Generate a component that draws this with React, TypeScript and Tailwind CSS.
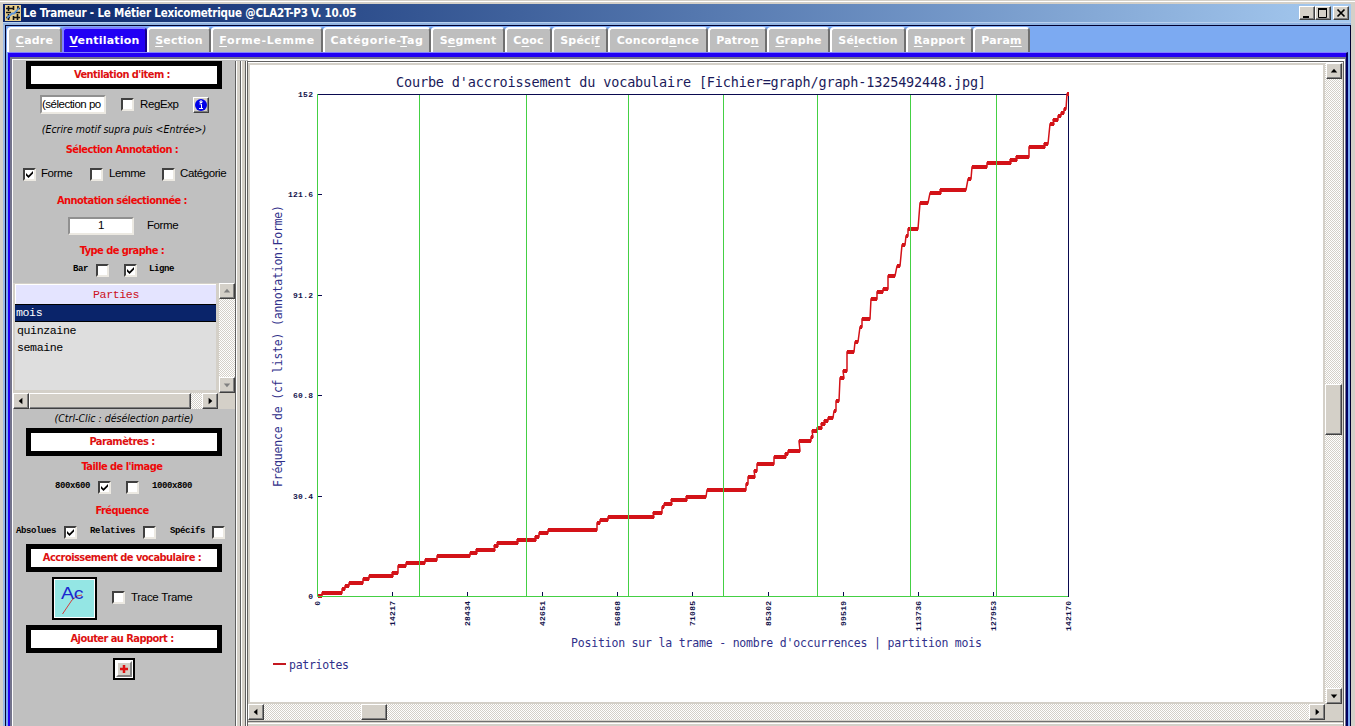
import type { ReactNode } from "react";

const tabs = [
  { pre: "", key: "C", post: "adre", width: "w-[55px]" },
  { pre: "", key: "V", post: "entilation", width: "w-[85px]", active: true },
  { pre: "", key: "S", post: "ection", width: "w-[64px]" },
  { pre: "", key: "F", post: "orme-Lemme", width: "w-[112px]", wide: true },
  { pre: "Catégorie-", key: "T", post: "ag", width: "w-[108px]", wide: true },
  { pre: "S", key: "e", post: "gment", width: "w-[74px]" },
  { pre: "C", key: "o", post: "oc", width: "w-[47px]" },
  { pre: "Spéci", key: "f", post: "", width: "w-[56px]" },
  { pre: "Concord", key: "a", post: "nce", width: "w-[100px]" },
  { pre: "Patro", key: "n", post: "", width: "w-[59px]" },
  { pre: "", key: "G", post: "raphe", width: "w-[63px]" },
  { pre: "Sé", key: "l", post: "ection", width: "w-[76px]" },
  { pre: "", key: "R", post: "apport", width: "w-[67px]" },
  { pre: "Para", key: "m", post: "", width: "w-[57px]" },
];

// flat parts of the curve: [x start, x end, y]
const steps = [
  [318, 322, 596], [322, 342, 593], [342, 345, 589], [345, 349, 586], [349, 363, 583],
  [363, 369, 579], [369, 393, 576], [392, 398, 573], [398, 406, 566], [406, 425, 563],
  [425, 437, 560], [437, 470, 556], [470, 477, 553], [476, 495, 550], [494, 498, 546],
  [497, 518, 543], [517, 536, 540], [535, 539, 537], [539, 548, 533], [548, 597, 530],
  [597, 600, 523], [600, 608, 520], [608, 654, 517], [653, 662, 513], [662, 664, 507],
  [664, 672, 504], [671, 687, 500], [686, 706, 497], [707, 746, 490], [746, 748, 484],
  [748, 755, 477], [754, 757, 471], [757, 774, 464], [774, 786, 457], [785, 788, 454],
  [788, 800, 451], [799, 811, 441], [811, 813, 437], [812, 817, 431], [817, 822, 428],
  [821, 825, 424], [824, 828, 421], [828, 833, 418], [834, 836, 411], [836, 839, 401],
  [840, 844, 378], [843, 847, 371], [847, 854, 352], [855, 858, 342], [860, 862, 327],
  [862, 870, 319], [871, 877, 299], [877, 883, 292], [883, 888, 289], [888, 895, 276],
  [897, 900, 266], [902, 905, 245], [906, 908, 236], [908, 918, 229], [920, 928, 203],
  [930, 941, 193], [940, 966, 190], [968, 971, 179], [972, 987, 167], [987, 1011, 163],
  [1010, 1017, 160], [1016, 1029, 157], [1029, 1045, 147], [1044, 1048, 144], [1050, 1054, 124],
  [1053, 1058, 120], [1058, 1061, 116], [1061, 1064, 113], [1064, 1066, 109], [1067, 1069, 94],
];

const separators = [419.5, 526.5, 628.5, 723.5, 817.5, 910.5, 996.5];

const xTicks = [
  { x: 317.5, label: "0" },
  { x: 392.5, label: "14217" },
  { x: 467.5, label: "28434" },
  { x: 542.5, label: "42651" },
  { x: 617.5, label: "56868" },
  { x: 692.5, label: "71085" },
  { x: 768.5, label: "85302" },
  { x: 843.5, label: "99519" },
  { x: 918.5, label: "113736" },
  { x: 993.5, label: "127953" },
  { x: 1068.5, label: "142170" },
];

const yTicks = [
  { y: 94.5, label: "152" },
  { y: 194.5, label: "121.6" },
  { y: 295.5, label: "91.2" },
  { y: 395.5, label: "60.8" },
  { y: 496.5, label: "30.4" },
  { y: 596.5, label: "0" },
];

const raised = "border border-t-white border-l-white border-r-[#404040] border-b-[#404040] bg-[#d4d0c8] shadow-[inset_-1px_-1px_0_#808080]";
const track = "bg-[repeating-conic-gradient(#ffffff_0_25%,#d4d0c8_0_50%)] bg-[length:2px_2px]";

function ArrowButton({ dir, disabled = false, className = "" }: { dir: "up" | "down" | "left" | "right"; disabled?: boolean; className?: string }) {
  const shapes = {
    up: "4,9 11,9 7.5,5",
    down: "4,6 11,6 7.5,10",
    left: "9,4 9,11 5,7.5",
    right: "6,4 6,11 10,7.5",
  };
  return (
    <div className={`h-4 w-4 shrink-0 ${raised} ${className}`}>
      <svg viewBox="0 0 15 15" className="h-[14px] w-[14px]">
        <polygon points={shapes[dir]} fill={disabled ? "#808080" : "#000"} />
      </svg>
    </div>
  );
}

function Check({ checked = false }: { checked?: boolean }) {
  return (
    <span className="block h-[13px] w-[13px] shrink-0 border-2 border-t-[#404040] border-l-[#404040] border-r-[#ece9e2] border-b-[#ece9e2] bg-white">
      {checked && (
        <svg viewBox="0 0 9 9" className="h-[9px] w-[9px]">
          <path d="M1 3v2.5l2.5 2.5L8 3.5V1L3.5 5.5z" fill="#000" />
        </svg>
      )}
    </span>
  );
}

function BoxTitle({ children, className = "" }: { children: ReactNode; className?: string }) {
  return (
    <div className={`ml-[13px] flex h-7 w-[196px] shrink-0 items-center justify-center border-[5px] border-black bg-white pr-1 font-['DejaVu_Sans_Condensed','DejaVu_Sans',sans-serif] text-[11px] font-bold tracking-[-0.55px] text-[#dd1111] ${className}`}>
      {children}
    </div>
  );
}

function RedLabel({ children, className = "" }: { children: ReactNode; className?: string }) {
  return (
    <div className={`flex w-[222px] shrink-0 items-center justify-center pr-1 font-['DejaVu_Sans_Condensed','DejaVu_Sans',sans-serif] text-[11px] font-bold tracking-[-0.55px] text-[#ee0808] ${className}`}>
      {children}
    </div>
  );
}

function TitleBar() {
  return (
    <div className="flex h-[18px] shrink-0 items-center bg-linear-to-r from-[#0a246a] to-[#a6caf0] pl-[2px]">
      <svg viewBox="0 0 16 16" className="h-4 w-4">
        <rect width="16" height="16" fill="#e8cf8c" />
        <path d="M1 3.500h8M12 3.500h3M1 7.500h5M10 7.500h5M1 12.500h4M8 12.500h7M3.500 1v5M3.500 9v6M8.500 1v4M8.500 11v4M12.500 9v6M13 1v3" stroke="#111" strokeWidth="1.600" />
        <path d="M2 13L7 8.500h2L14 3" stroke="#5b93d8" strokeWidth="1.800" fill="none" />
      </svg>
      <span className="mt-px ml-[2px] flex-1 whitespace-nowrap font-['DejaVu_Sans_Condensed','DejaVu_Sans',sans-serif] text-[11.5px] font-bold tracking-[-0.19px] text-white">
        Le Trameur - Le Métier Lexicometrique @CLA2T-P3 V. 10.05
      </span>
      <div className="mr-[2px] flex">
        <div className={`h-[14px] w-4 ${raised}`}>
          <svg viewBox="0 0 14 12" className="h-3 w-[14px]"><path d="M3 9h6v2H3z" /></svg>
        </div>
        <div className={`h-[14px] w-4 ${raised}`}>
          <svg viewBox="0 0 14 12" className="h-3 w-[14px]"><path d="M2.500 2v8.500h8V2M2 2h9" fill="none" stroke="#000" /><path d="M2 1h9v2H2z" /></svg>
        </div>
        <div className={`ml-[2px] h-[14px] w-4 ${raised}`}>
          <svg viewBox="0 0 14 12" className="h-3 w-[14px]"><path d="M3.500 2.500l7 7M10.500 2.500l-7 7" stroke="#000" strokeWidth="1.700" /></svg>
        </div>
      </div>
    </div>
  );
}

function TabBar() {
  return (
    <div className="flex h-[26px] shrink-0 bg-[#7caaf2] pt-px">
      {tabs.map((tab) => (
        <div
          key={tab.pre + tab.key + tab.post}
          className={`flex shrink-0 items-center justify-center rounded-t-[4px] border-t-2 border-l-2 border-r-2 pt-[2px] whitespace-nowrap font-['DejaVu_Sans',sans-serif] text-[11px] font-bold text-white ${tab.width} ${
            tab.wide ? "tracking-[0.65px]" : "tracking-[0.2px]"
          } ${
            tab.active ? "border-t-[#8080ff] border-l-[#8080ff] border-r-[#15008a] bg-[#2200f4]" : "border-t-white border-l-white border-r-[#707070] bg-[#bebebe]"
          }`}
        >
          <span>
            {tab.pre}
            <span className="underline underline-offset-2">{tab.key}</span>
            {tab.post}
          </span>
        </div>
      ))}
    </div>
  );
}

function PartList() {
  return (
    <div className="flex h-[126px] w-[222px] shrink-0 flex-col bg-[#d4d0c8]">
      <div className="flex h-[110px]">
        <div className="mt-px ml-[2px] h-[106px] w-[201px] bg-[#dedede] font-['Liberation_Mono',monospace] text-[11.600px] text-black">
          <div className="flex h-5 items-center justify-center border-t border-l border-white bg-[#e4e4ff] text-[#cc1122]">Parties</div>
          <div className="flex h-[18px] items-center border-y border-black bg-[#0a246a] pl-px text-white">mois</div>
          <div className="flex h-[17px] items-center pl-[2px]">quinzaine</div>
          <div className="flex h-[17px] items-center pl-[2px]">semaine</div>
        </div>
        <div className={`ml-[3px] flex w-4 flex-col justify-between ${track}`}>
          <ArrowButton dir="up" disabled />
          <ArrowButton dir="down" disabled />
        </div>
      </div>
      <div className={`flex h-4 w-[205px] ${track}`}>
        <ArrowButton dir="left" />
        <div className={`mr-auto w-[162px] ${raised}`} />
        <ArrowButton dir="right" />
      </div>
    </div>
  );
}

function Sidebar() {
  return (
    <aside className="flex w-[222px] shrink-0 flex-col overflow-hidden bg-[#c0c0c0] font-['Liberation_Sans',sans-serif] text-[11.5px] tracking-[-0.4px] text-black">
      <BoxTitle>Ventilation d'item :</BoxTitle>
      <div className="mt-[6px] flex h-[19px] items-center">
        <div className="ml-[27px] flex h-[19px] w-[66px] items-center border-2 border-t-[#909090] border-l-[#909090] border-[#ece9e2] bg-white whitespace-nowrap tracking-[-0.5px]">(sélection po</div>
        <div className="ml-[15px] flex items-center gap-[6px]">
          <Check />
          <span className="w-[53px]">RegExp</span>
        </div>
        <div className={`h-4 w-4 ${raised}`}>
          <svg viewBox="0 0 14 14" className="h-[14px] w-[14px]">
            <circle cx="7" cy="7" r="6" fill="#0000e8" />
            <path d="M6 3h2v1.500H6zM5.500 6h2v4M5 10.500h4" fill="none" stroke="#fff" />
          </svg>
        </div>
      </div>
      <div className="flex h-[31px] w-[222px] shrink-0 items-center justify-center whitespace-nowrap font-['DejaVu_Sans_Condensed',sans-serif] text-[10.500px] tracking-normal italic">(Ecrire motif supra puis &lt;Entrée&gt;)</div>
      <RedLabel className="mt-[2px] h-[7px]">Sélection Annotation :</RedLabel>
      <div className="mt-[12px] flex h-[16px] shrink-0 items-center pl-[10px]">
        <Check checked />
        <span className="ml-[5px] w-[49px]">Forme</span>
        <Check />
        <span className="ml-[6px] w-[53px]">Lemme</span>
        <Check />
        <span className="ml-[5px]">Catégorie</span>
      </div>
      <RedLabel className="h-[37px] pt-[2px]">Annotation sélectionnée :</RedLabel>
      <div className="-mt-[2px] flex h-[18px] shrink-0 items-center">
        <div className="ml-[55px] flex h-[18px] w-[66px] items-center justify-center border-2 border-t-[#909090] border-l-[#909090] border-[#ece9e2] bg-white">1</div>
        <span className="ml-[13px]">Forme</span>
      </div>
      <RedLabel className="h-[30px] pt-[2px]">Type de graphe :</RedLabel>
      <div className="-mt-[2px] flex h-[14px] shrink-0 items-center pl-[60px] font-['Liberation_Mono',monospace] text-[9px] font-bold">
        <span className="w-[23px]">Bar</span>
        <Check />
        <span className="w-[15px]" />
        <Check checked />
        <span className="ml-3">Ligne</span>
      </div>
      <div className="h-[6px] shrink-0" />
      <PartList />
      <div className="flex h-[19px] w-[222px] shrink-0 items-center justify-center whitespace-nowrap font-['DejaVu_Sans_Condensed',sans-serif] text-[10.500px] tracking-normal italic">(Ctrl-Clic : désélection partie)</div>
      <BoxTitle>Paramètres :</BoxTitle>
      <RedLabel className="h-[23px]">Taille de l'image</RedLabel>
      <div className="mt-px flex h-[14px] shrink-0 items-center pl-[42px] font-['Liberation_Mono',monospace] text-[9px] font-bold">
        <span className="w-[43px]">800x600</span>
        <Check checked />
        <span className="w-[15px]" />
        <Check />
        <span className="ml-[13px]">1000x800</span>
      </div>
      <RedLabel className="h-[31px] pt-[3px]">Fréquence</RedLabel>
      <div className="flex h-[14px] shrink-0 items-center pl-[3px] font-['Liberation_Mono',monospace] text-[9px] font-bold">
        <span className="w-[48px]">Absolues</span>
        <Check checked />
        <span className="ml-[13px] w-[53px]">Relatives</span>
        <Check />
        <span className="ml-[14px] w-[42px]">Spécifs</span>
        <Check />
      </div>
      <BoxTitle className="mt-[5px]">Accroissement de vocabulaire :</BoxTitle>
      <div className="mt-[5px] flex h-[43px] shrink-0 items-center">
        <div className="ml-[39px] h-[43px] w-[45px] border-2 border-black bg-[#94e6e4] shadow-[inset_0_0_0_1px_#fff]">
          <svg viewBox="0 0 41 39" className="h-[39px] w-[41px]">
            <path d="M8.500 35L18 21l5-4 5-1" fill="none" stroke="#d43c3c" />
            <text x="7" y="20" fontSize="17" textLength="22" lengthAdjust="spacingAndGlyphs" fontFamily="Liberation Sans" fill="#1c28d0">Ac</text>
          </svg>
        </div>
        <div className="-mt-[2px] ml-[15px] flex items-center gap-[6px]">
          <Check />
          <span className="tracking-[-0.3px]">Trace Trame</span>
        </div>
      </div>
      <BoxTitle className="mt-[5px]">Ajouter au Rapport :</BoxTitle>
      <div className="mt-[5px] ml-[100px] h-[22px] w-[22px] shrink-0 border-2 border-black bg-white p-px">
        <div className="h-4 w-4 border-2 border-t-white border-l-white border-[#808080] bg-[#d4d0c8]">
          <svg viewBox="0 0 12 12" className="h-3 w-3"><path d="M6 2v8M2 6h8" stroke="#dd1111" strokeWidth="2.500" /></svg>
        </div>
      </div>
    </aside>
  );
}

function Chart() {
  const line = steps.map(([x1, x2, y]) => `${x1},${y} ${x2},${y}`).join(" ");
  return (
    <svg viewBox="250 65 1073 637" className="h-[637px] w-[1073px] shrink-0 bg-white" fontFamily="'DejaVu Sans Mono', monospace">
      <text x="396" y="87" fontSize="13.500" textLength="590" fill="#1a1a5a">Courbe d'accroissement du vocabulaire [Fichier=graph/graph-1325492448.jpg]</text>
      <path d="M318 94.500H1068.500V597" fill="none" stroke="#0a0a50" />
      <g stroke="#0a0a50">
        {yTicks.map((t) => <path key={t.label} d={`M318 ${t.y}h4`} />)}
        {xTicks.map((t) => <path key={t.label} d={`M${t.x} 592v4`} />)}
      </g>
      <g stroke="#d31218" fill="none">
        <polyline points={line} strokeWidth="1.500" />
        {steps.map(([x1, x2, y]) => <path key={x1 + "-" + y} d={`M${x1} ${y}H${x2}`} strokeWidth="4" />)}
      </g>
      <path d="M317.500 94V596.500H1068" fill="none" stroke="#44d044" />
      {separators.map((x) => <path key={x} d={`M${x} 95V597`} stroke="#44d044" />)}
      <g fontSize="8" fontWeight="bold" fill="#14144c" fontFamily="'Liberation Mono', monospace">
        {yTicks.map((t) => (
          <text key={t.label} x="313" y={t.y + 2.5} textAnchor="end" textLength={t.label.length * 5}>{t.label}</text>
        ))}
        {xTicks.map((t) => (
          <text key={t.label} transform={`translate(${t.x + 2.5} 601) rotate(-90)`} textAnchor="end" textLength={t.label.length * 5}>{t.label}</text>
        ))}
      </g>
      <g fontSize="11.500" fill="#30308a">
        <text transform="translate(282 487) rotate(-90)" textLength="282">Fréquence de (cf liste) (annotation:Forme)</text>
        <text x="571" y="647" textLength="411">Position sur la trame - nombre d'occurrences | partition mois</text>
        <text x="289" y="669" textLength="60">patriotes</text>
      </g>
      <path d="M273 664h13" stroke="#c41820" strokeWidth="2" />
    </svg>
  );
}

function Viewer() {
  return (
    <main className="mt-px flex w-[1096px] shrink-0 flex-col border-t border-r border-[#606060] bg-[#d4d0c8]">
      <div className="h-px shrink-0 bg-white" />
      <div className="flex h-[641px] shrink-0">
        <div className="flex w-[1077px] flex-col border-t-2 border-l-2 border-[#d4d0c8]">
          <Chart />
        </div>
        <div className={`flex h-[641px] w-[17px] flex-col items-end ${track}`}>
          <ArrowButton dir="up" />
          <div className={`mt-[305px] h-[51px] w-[17px] ${raised}`} />
          <ArrowButton dir="down" className="mt-auto" />
        </div>
      </div>
      <div className="flex h-4 shrink-0">
        <div className={`flex w-[1077px] ${track}`}>
          <ArrowButton dir="left" />
          <div className={`ml-[97px] w-[26px] ${raised}`} />
          <ArrowButton dir="right" className="ml-auto" />
        </div>
      </div>
      <div className="mt-px h-[3px] shrink-0 border-t border-b border-t-[#707070] border-b-white" />
    </main>
  );
}

export default function App() {
  return (
    <div className="flex h-[726px] w-[1355px] flex-col overflow-hidden bg-[#d4d0c8]">
      <div className="mt-px h-px shrink-0 bg-white" />
      <div className="mt-[2px] flex min-h-0 flex-1 flex-col pr-1 pl-[3px]">
        <TitleBar />
        <div className="h-px shrink-0 bg-[#b8d0ee]" />
        <div className="h-[2px] shrink-0 bg-[#8fb2e0]" />
        <div className="flex min-h-0 flex-1 border-l-2 border-[#9bbbe8]">
          <div className="flex min-h-0 flex-1 flex-col border-t border-r border-l border-[#000030] bg-[#7caaf2]">
            <div className="ml-px shrink-0">
              <TabBar />
            </div>
            <div className="mr-[2px] ml-[2px] flex min-h-0 flex-1 flex-col border-t border-r-2 border-t-[#8080ff] border-r-[#000060] bg-[#2200f4] pt-1 pl-[2px]">
              <div className="flex min-h-0 flex-1 border-t-2 border-r border-l-2 border-[#74748c] bg-white">
                <div className="flex min-h-0 border-t border-l border-white">
                  <div className="flex border-t border-[#c0c0c0] bg-[#d4d0c8]">
                    <Sidebar />
                    <div className="w-px bg-[#606060]" />
                    <div className="w-1 border-l border-white" />
                    <div className="w-px bg-[#606060]" />
                    <div className="w-1 border-l border-white" />
                    <div className="w-px bg-[#606060]" />
                    <div className="w-px bg-white" />
                    <div className="w-px bg-[#606060]" />
                  </div>
                  <Viewer />
                </div>
              </div>
            </div>
          </div>
        </div>
      </div>
    </div>
  );
}
